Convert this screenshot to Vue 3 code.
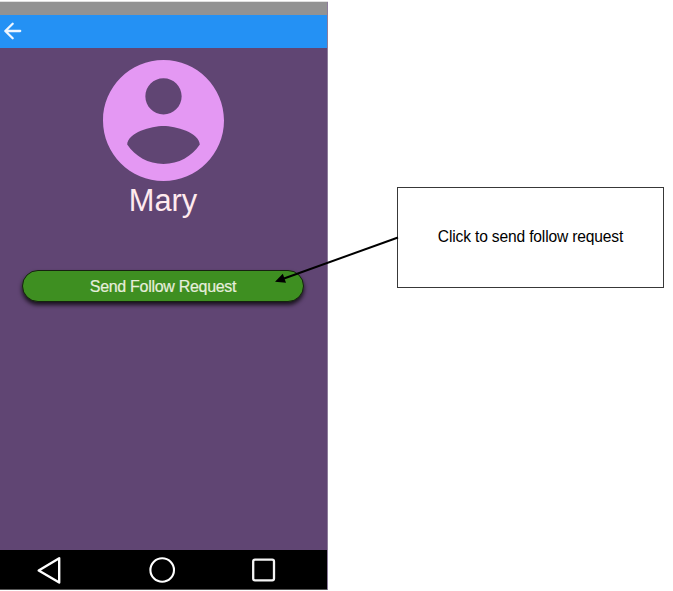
<script setup>
const title = 'Mary'
const action = 'Send Follow Request'
const note = 'Click to send follow request'
</script>

<template>
  <main class="board">
    <section class="phone">
      <div class="status"></div>
      <header class="appbar">
        <svg class="back" viewBox="0 0 20 20" fill="none" stroke="#eef6ff" stroke-width="2.300" stroke-linecap="round" stroke-linejoin="round">
          <path d="M17.200 10H2.500M9.700 2.700L2.300 10l7.400 7.300" />
        </svg>
      </header>
      <div class="content">
        <svg class="avatar" viewBox="2 2 20 20">
          <path
            fill="#e498f3"
            d="M12 2C6.48 2 2 6.48 2 12s4.48 10 10 10 10-4.48 10-10S17.52 2 12 2zm0 3c1.66 0 3 1.34 3 3s-1.34 3-3 3-3-1.34-3-3 1.34-3 3-3zm0 14.200c-2.500 0-4.710-1.280-6-3.220.030-1.990 4-3.080 6-3.080 1.990 0 5.970 1.090 6 3.080-1.290 1.940-3.500 3.220-6 3.220z"
          />
        </svg>
        <h1 class="name">{{ title }}</h1>
        <button class="follow">{{ action }}</button>
      </div>
      <nav class="navbar">
        <svg viewBox="0 0 30 30" fill="none" stroke="#fff" stroke-width="2.400" stroke-linejoin="round">
          <path d="M25.200 3.200V27.500L4.700 15.500z" />
        </svg>
        <svg class="home" viewBox="0 0 30 30" fill="none" stroke="#fff" stroke-width="2.100">
          <circle cx="15.200" cy="15" r="11.800" />
        </svg>
        <svg viewBox="0 0 30 30" fill="none" stroke="#f4f4f4" stroke-width="2.300">
          <rect x="4.200" y="4.600" width="20.800" height="20.800" rx="1.800" />
        </svg>
      </nav>
    </section>
    <aside class="note">{{ note }}</aside>
    <svg class="arrow" viewBox="0 0 130 60">
      <path d="M128 7.500L14 48.500" stroke="#000" stroke-width="2" />
      <path d="M5 51.700L12.800 43.700L16 52.700z" />
    </svg>
  </main>
</template>

<style>
body {
  background: #fff;
}
</style>

<style scoped>
.board {
  position: relative;
  display: flex;
  align-items: flex-start;
  width: 673px;
  height: 591px;
  overflow: hidden;
  font-family: "Liberation Sans", Arial, sans-serif;
}
.phone {
  box-sizing: border-box;
  display: flex;
  flex-direction: column;
  width: 328px;
  height: 588px;
  margin-top: 2px;
  border-right: 1px solid #8d7c9b;
  background: #604573;
  box-shadow: 0 -1px 0 #e0e0e0;
}
.status {
  height: 13px;
  background: #929292;
}
.appbar {
  display: flex;
  align-items: center;
  height: 33px;
  padding-left: 3px;
  background: #2491f4;
}
.back {
  width: 20px;
  height: 20px;
  margin-top: -1px;
}
.content {
  display: flex;
  flex: 1;
  flex-direction: column;
  align-items: center;
  padding: 11.500px 1px 0 0;
}
.avatar {
  width: 121px;
  height: 121px;
  flex: none;
}
.name {
  margin: 2px 0 0;
  color: #ffeaee;
  font-size: 30.800px;
  font-weight: 400;
  line-height: 36px;
}
.follow {
  box-sizing: border-box;
  width: 282px;
  height: 32px;
  margin: 51px 0 0;
  padding: 2px 0 0;
  border: 1px solid #16220f;
  border-radius: 16px;
  background: #3e8f21;
  box-shadow: 0 3px 4px rgba(0, 0, 0, 0.75);
  color: #e6eedc;
  font-family: inherit;
  font-size: 16px;
  letter-spacing: -0.300px;
  -webkit-text-stroke: 0.200px #e6eedc;
}
.navbar {
  box-sizing: border-box;
  display: flex;
  align-items: center;
  height: 40px;
  padding-left: 34px;
  border-bottom: 1px solid #555;
  background: #000;
}
.navbar svg {
  width: 30px;
  height: 30px;
  flex: none;
}
.navbar .home {
  margin: 0 72px 0 83px;
}
.note {
  box-sizing: border-box;
  display: flex;
  align-items: center;
  justify-content: center;
  width: 267px;
  height: 101px;
  margin: 187px 0 0 69px;
  padding-bottom: 2px;
  border: 1px solid #383838;
  background: #fff;
  color: #000;
  font-size: 15.600px;
  letter-spacing: -0.160px;
}
.arrow {
  position: absolute;
  left: 270px;
  top: 230px;
  width: 130px;
  height: 60px;
}
</style>
